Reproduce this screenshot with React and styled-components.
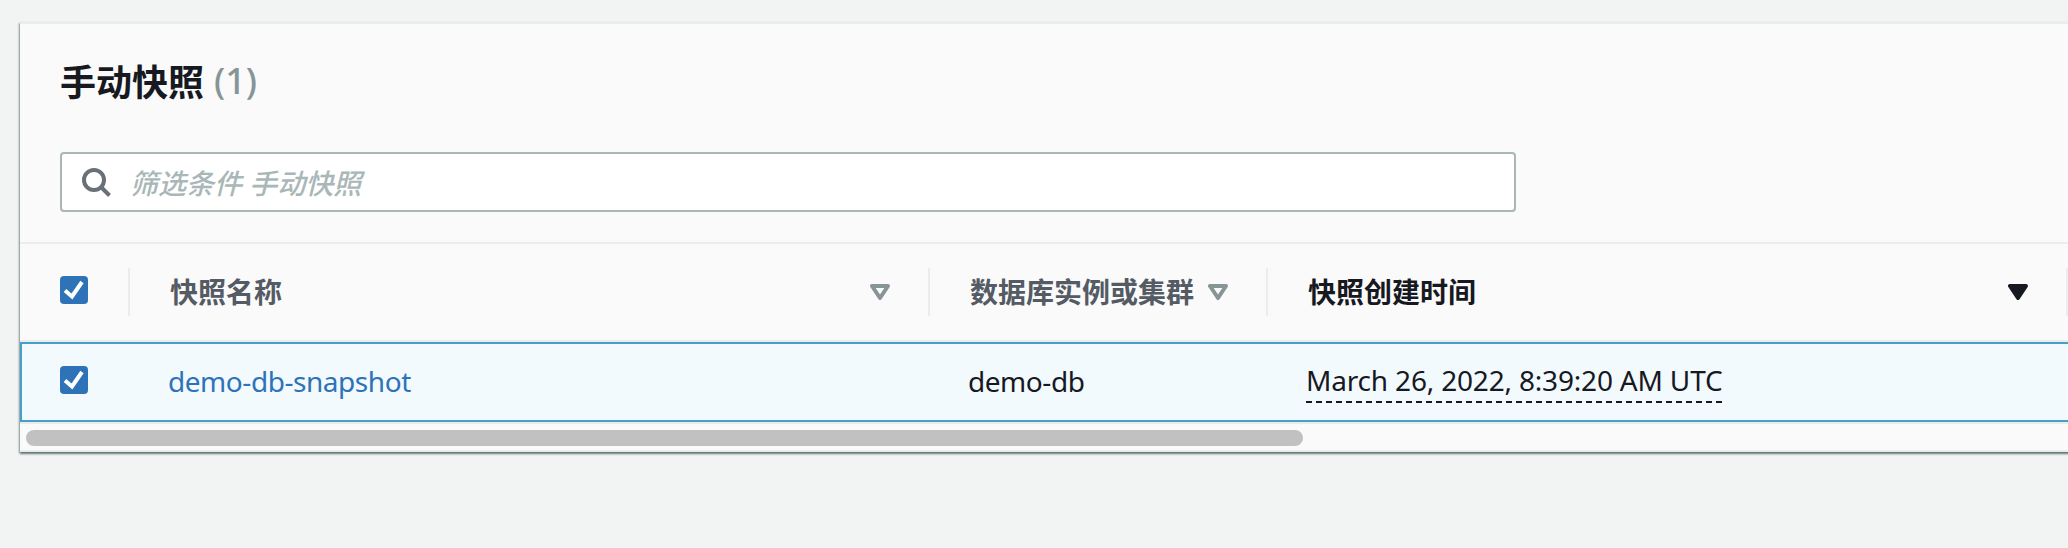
import React from 'react';
import styled, { createGlobalStyle } from 'styled-components';

const GlobalStyle = createGlobalStyle`
  *, *::before, *::after { box-sizing: border-box; }
  html, body { margin: 0; background: #f2f4f4; }
  body {
    font-family: "Noto Sans", "Noto Sans CJK SC", sans-serif;
    font-size: 28px;
    color: #16191f;
    overflow: hidden;
  }
`;

const Page = styled.main`
  height: 548px;
  padding: 22px 0 0 20px;
  overflow: hidden;
`;

const Panel = styled.section`
  display: flex;
  flex-direction: column;
  height: 430px;
  background: #fafafa;
  border-top: 2px solid #ebeded;
  border-bottom: 2px solid #ebeded;
  margin-right: -20px;
  box-shadow: 0 2px 2px 0 rgba(0, 28, 36, 0.5), -1px 1px 2px 0 rgba(0, 28, 36, 0.3);
`;

const PanelHeader = styled.header`
  display: flex;
  flex-direction: column;
  align-items: flex-start;
  gap: 42px;
  height: 220px;
  padding: 26px 40px 30px;
  border-bottom: 2px solid #ebeded;
`;

const Title = styled.h2`
  display: flex;
  gap: 10px;
  margin: 0;
  height: 60px;
  line-height: 60px;
  font-family: "Noto Sans CJK SC", sans-serif;
  font-size: 36px;
  font-weight: 700;
`;

const Counter = styled.span`
  padding-top: 1px;
  font-family: "Noto Sans", sans-serif;
  font-weight: 500;
  color: #879596;
`;

const SearchField = styled.div`
  display: flex;
  align-items: center;
  gap: 19px;
  width: 1456px;
  height: 60px;
  flex: none;
  padding-left: 19px;
  background: #fff;
  border: 2px solid #aab7b8;
  border-radius: 4px;
`;

const Placeholder = styled.span`
  font-family: "Noto Sans CJK SC", sans-serif;
  font-style: italic;
  font-weight: 500;
  line-height: 56px;
  word-spacing: 1px;
  color: #aab7b8;
`;

const Columns = styled.div`
  display: grid;
  grid-template-columns: 110px 800px 338px 800px;
`;

const HeadRow = styled(Columns)`
  height: 98px;
  padding: 24px 0;
  border-bottom: 2px solid #ebeded;
`;

const HeadCell = styled.div`
  display: flex;
  align-items: center;
  justify-content: space-between;
  height: 48px;
  padding: 0 38px 0 40px;
  border-right: 2px solid #ebeded;
  font-family: "Noto Sans CJK SC", sans-serif;
  font-weight: 700;
  white-space: nowrap;
  color: ${(p) => (p.$active ? '#16191f' : '#545b64')};
`;

const HeadLabel = styled.span`
  line-height: 46px;
  padding-bottom: 2px;
`;

const SelectedRow = styled(Columns)`
  height: 80px;
  border: 2px solid #44a0c8;
  border-right: 0;
  background: #f3fafe;
  box-shadow: 0 2px 0 #ebeded;
`;

const Cell = styled.div`
  display: flex;
  align-items: center;
  height: 76px;
  padding: 0 0 2px 36px;
  letter-spacing: -0.45px;
  white-space: nowrap;
`;

const SelectCell = styled(Cell)`
  padding: 0 0 0 38px;
`;

const SnapshotLink = styled.a`
  color: #2e73b8;
`;

const Timestamp = styled.span`
  height: 38px;
  line-height: 31px;
  margin-top: 6px;
  letter-spacing: -0.18px;
  background: repeating-linear-gradient(90deg, #16191f 0 6px, transparent 6px 10px) 0 100% / 100% 2px no-repeat;
`;

const Checkbox = styled.span`
  display: flex;
  width: 28px;
  height: 28px;
  flex: none;
  border-radius: 4px;
  background: #2e73b8;
  margin-bottom: 4px;
`;

const ScrollTrack = styled.div`
  padding: 8px 0 0 6px;
`;

const ScrollThumb = styled.div`
  width: 1277px;
  height: 16px;
  border-radius: 8px;
  background: #c1c1c1;
`;

const CheckedBox = () => (
  <Checkbox role="checkbox" aria-checked="true">
    <svg width="28" height="28" viewBox="0 0 28 28" fill="none" stroke="#fff" strokeWidth="4">
      <path d="M5 14.5 12 20.5 22 6" />
    </svg>
  </Checkbox>
);

const SearchIcon = () => (
  <svg width="30" height="30" viewBox="0 0 30 30" fill="none" stroke="#687078" strokeWidth="4">
    <circle cx="13" cy="13" r="10" />
    <path d="M20 20 28.5 28.5" />
  </svg>
);

const SortIcon = ({ filled }) => (
  <svg width="20" height="16" viewBox="0 0 20 16" strokeWidth="4" strokeLinejoin="round"
    fill={filled ? '#16191f' : 'none'} stroke={filled ? '#16191f' : '#879596'}>
    <path d="M2 2H18L10 14Z" />
  </svg>
);

const columns = [
  { label: '快照名称' },
  { label: '数据库实例或集群' },
  { label: '快照创建时间', active: true },
];

export default function App() {
  return (
    <>
      <GlobalStyle />
      <Page>
        <Panel>
          <PanelHeader>
            <Title>手动快照<Counter>(1)</Counter></Title>
            <SearchField>
              <SearchIcon />
              <Placeholder>筛选条件 手动快照</Placeholder>
            </SearchField>
          </PanelHeader>
          <HeadRow>
            <HeadCell><CheckedBox /></HeadCell>
            {columns.map((c) => (
              <HeadCell key={c.label} $active={c.active}>
                <HeadLabel>{c.label}</HeadLabel>
                <SortIcon filled={c.active} />
              </HeadCell>
            ))}
          </HeadRow>
          <SelectedRow>
            <SelectCell><CheckedBox /></SelectCell>
            <Cell><SnapshotLink>demo-db-snapshot</SnapshotLink></Cell>
            <Cell>demo-db</Cell>
            <Cell><Timestamp>March 26, 2022, 8:39:20 AM UTC</Timestamp></Cell>
          </SelectedRow>
          <ScrollTrack><ScrollThumb /></ScrollTrack>
        </Panel>
      </Page>
    </>
  );
}
